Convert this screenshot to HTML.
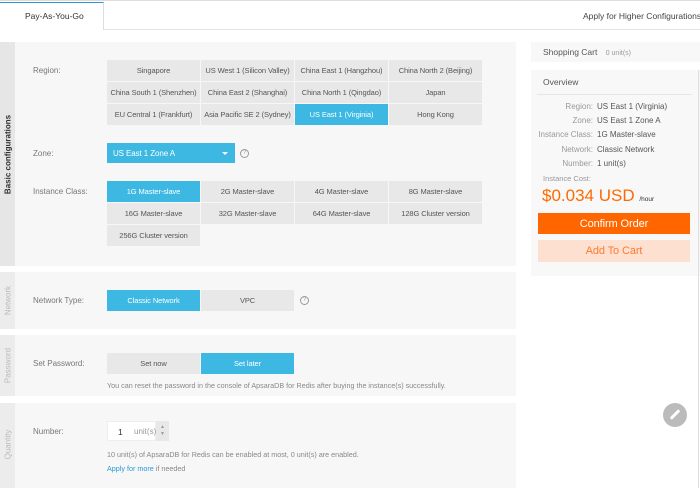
<html><head><style>
*{box-sizing:border-box;margin:0;padding:0}
body{width:700px;height:488px;background:#fff;font-family:"Liberation Sans",sans-serif;font-size:8px;color:#666;position:relative;overflow:hidden}
.a{position:absolute;white-space:nowrap}
.b{position:absolute;background:#e8e8e8;color:#555;text-align:center;font-size:7.5px;display:flex;align-items:center;justify-content:center;white-space:nowrap;letter-spacing:-0.1px}
.on{background:#3cb8e3;color:#fff}
.sec{position:absolute;left:0;width:516px;background:#f7f7f7}
.side{position:absolute;left:0;top:0;bottom:0;width:15px;background:#ececec}
.vl{position:absolute;white-space:nowrap;transform:rotate(-90deg);transform-origin:center;font-size:8px}
.lbl{position:absolute;left:33px;font-size:8px;color:#777}
.q{position:absolute;width:9px;height:9px;border:1px solid #999;border-radius:50%;font-size:6px;color:#999;text-align:center;line-height:7px}
.ov{position:absolute;font-size:8px;color:#999;text-align:right;width:60px;left:533px;white-space:nowrap}
.ovv{position:absolute;left:597px;font-size:8px;color:#555;white-space:nowrap}
</style></head><body>
<div class="a" style="left:0;top:0;width:700px;height:1px;background:#ddd"></div>
<div class="a" style="left:0;top:29px;width:700px;height:1px;background:#e3e3e3"></div>
<div class="a" style="left:0;top:2px;width:104px;height:28px;background:#fff;border-top:1px solid #2b99d6;border-right:1px solid #ddd"></div>
<div class="a" style="left:25px;top:11px;font-size:8.5px;color:#333">Pay-As-You-Go</div>
<div class="a" style="left:583px;top:11px;font-size:8.5px;color:#444">Apply for Higher Configurations</div>

<div class="sec" style="top:42px;height:224px"><div class="side" style="background:#e6e6e6"></div>
<div class="vl" style="left:-40px;top:108px;width:96px;text-align:center;color:#333;font-weight:bold">Basic configurations</div></div>
<div class="lbl" style="top:66px">Region:</div>
<div class="lbl" style="top:149px">Zone:</div>
<div class="lbl" style="top:187px">Instance Class:</div>

<div class="b" style="left:107px;top:60px;width:93px;height:21px">Singapore</div>
<div class="b" style="left:201px;top:60px;width:93px;height:21px">US West 1 (Silicon Valley)</div>
<div class="b" style="left:295px;top:60px;width:93px;height:21px">China East 1 (Hangzhou)</div>
<div class="b" style="left:389px;top:60px;width:93px;height:21px">China North 2 (Beijing)</div>
<div class="b" style="left:107px;top:82px;width:93px;height:21px">China South 1 (Shenzhen)</div>
<div class="b" style="left:201px;top:82px;width:93px;height:21px">China East 2 (Shanghai)</div>
<div class="b" style="left:295px;top:82px;width:93px;height:21px">China North 1 (Qingdao)</div>
<div class="b" style="left:389px;top:82px;width:93px;height:21px">Japan</div>
<div class="b" style="left:107px;top:104px;width:93px;height:21px">EU Central 1 (Frankfurt)</div>
<div class="b" style="left:201px;top:104px;width:93px;height:21px">Asia Pacific SE 2 (Sydney)</div>
<div class="b on" style="left:295px;top:104px;width:93px;height:21px">US East 1 (Virginia)</div>
<div class="b" style="left:389px;top:104px;width:93px;height:21px">Hong Kong</div>

<div class="b on" style="left:107px;top:143px;width:128px;height:20px;justify-content:flex-start;padding-left:6px;font-size:8px">US East 1 Zone A</div>
<div class="a" style="left:222px;top:152px;border-left:3px solid transparent;border-right:3px solid transparent;border-top:3px solid #fff"></div>
<div class="q" style="left:240px;top:149px">?</div>

<div class="b on" style="left:107px;top:181px;width:93px;height:21px">1G Master-slave</div>
<div class="b" style="left:201px;top:181px;width:93px;height:21px">2G Master-slave</div>
<div class="b" style="left:295px;top:181px;width:93px;height:21px">4G Master-slave</div>
<div class="b" style="left:389px;top:181px;width:93px;height:21px">8G Master-slave</div>
<div class="b" style="left:107px;top:203px;width:93px;height:21px">16G Master-slave</div>
<div class="b" style="left:201px;top:203px;width:93px;height:21px">32G Master-slave</div>
<div class="b" style="left:295px;top:203px;width:93px;height:21px">64G Master-slave</div>
<div class="b" style="left:389px;top:203px;width:93px;height:21px">128G Cluster version</div>
<div class="b" style="left:107px;top:225px;width:93px;height:21px">256G Cluster version</div>

<div class="sec" style="top:272px;height:57px"><div class="side"></div>
<div class="vl" style="left:-17px;top:24px;width:50px;text-align:center;color:#bbb">Network</div></div>
<div class="lbl" style="top:296px">Network Type:</div>
<div class="b on" style="left:107px;top:290px;width:93px;height:21px">Classic Network</div>
<div class="b" style="left:201px;top:290px;width:93px;height:21px">VPC</div>
<div class="q" style="left:300px;top:296px">?</div>

<div class="sec" style="top:335px;height:61px"><div class="side"></div>
<div class="vl" style="left:-17px;top:26px;width:50px;text-align:center;color:#bbb">Password</div></div>
<div class="lbl" style="top:359px">Set Password:</div>
<div class="b" style="left:107px;top:353px;width:93px;height:21px">Set now</div>
<div class="b on" style="left:201px;top:353px;width:93px;height:21px">Set later</div>
<div class="a" style="left:107px;top:381px;font-size:7.2px;color:#888">You can reset the password in the console of ApsaraDB for Redis after buying the instance(s) successfully.</div>

<div class="sec" style="top:403px;height:85px"><div class="side"></div>
<div class="vl" style="left:-17px;top:37px;width:50px;text-align:center;color:#bbb">Quantity</div></div>
<div class="lbl" style="top:427px">Number:</div>
<div class="a" style="left:107px;top:421px;width:49px;height:20px;background:#fff;border:1px solid #eee"></div>
<div class="a" style="left:118px;top:427px;font-size:8.5px;color:#333">1</div>
<div class="a" style="left:134px;top:427px;font-size:8px;color:#999">unit(s)</div>
<div class="a" style="left:156px;top:421px;width:13px;height:20px;background:#e8e8e8;color:#999;font-size:5px;text-align:center;line-height:7px;padding-top:3px">▲<br>▼</div>
<div class="a" style="left:107px;top:450px;font-size:7.2px;color:#888">10 unit(s) of ApsaraDB for Redis can be enabled at most, 0 unit(s) are enabled.</div>
<div class="a" style="left:107px;top:464px;font-size:7.2px;color:#888"><span style="color:#2b99d6">Apply for more</span> if needed</div>

<div class="a" style="left:531px;top:42px;width:169px;height:20px;background:#f8f8f8"></div>
<div class="a" style="left:543px;top:47px;font-size:8.5px;color:#555">Shopping Cart <span style="font-size:7px;color:#999;margin-left:6px">0 unit(s)</span></div>
<div class="a" style="left:531px;top:70px;width:169px;height:206px;background:#f8f8f8"></div>
<div class="a" style="left:698px;top:70px;width:1px;height:418px;background:#ddd"></div>
<div class="a" style="left:543px;top:77px;font-size:8.5px;color:#555">Overview</div>
<div class="a" style="left:537px;top:94px;width:155px;height:1px;background:#e6e6e6"></div>
<div class="ov" style="top:102px">Region:</div><div class="ovv" style="top:102px">US East 1 (Virginia)</div>
<div class="ov" style="top:116px">Zone:</div><div class="ovv" style="top:116px">US East 1 Zone A</div>
<div class="ov" style="top:130px;left:513px;width:80px">Instance Class:</div><div class="ovv" style="top:130px">1G Master-slave</div>
<div class="ov" style="top:145px">Network:</div><div class="ovv" style="top:145px">Classic Network</div>
<div class="ov" style="top:159px">Number:</div><div class="ovv" style="top:159px">1 unit(s)</div>
<div class="a" style="left:543px;top:174px;font-size:7.5px;color:#999">Instance Cost:</div>
<div class="a" style="left:542px;top:186px;font-size:17px;color:#ff6a00">$0.034 USD <span style="font-size:6.5px;color:#333">/hour</span></div>
<div class="b" style="left:538px;top:213px;width:152px;height:21px;background:#ff6600;color:#fff;font-size:11px">Confirm Order</div>
<div class="b" style="left:538px;top:240px;width:152px;height:22px;background:#fde0cf;color:#ff7a30;font-size:11px">Add To Cart</div>

<div class="a" style="left:663px;top:403px;width:24px;height:24px;border-radius:50%;background:#bbb"></div>
<div class="a" style="left:669px;top:413px;width:12px;height:3px;background:#fff;border-radius:1px;transform:rotate(-45deg)"></div>
</body></html>
